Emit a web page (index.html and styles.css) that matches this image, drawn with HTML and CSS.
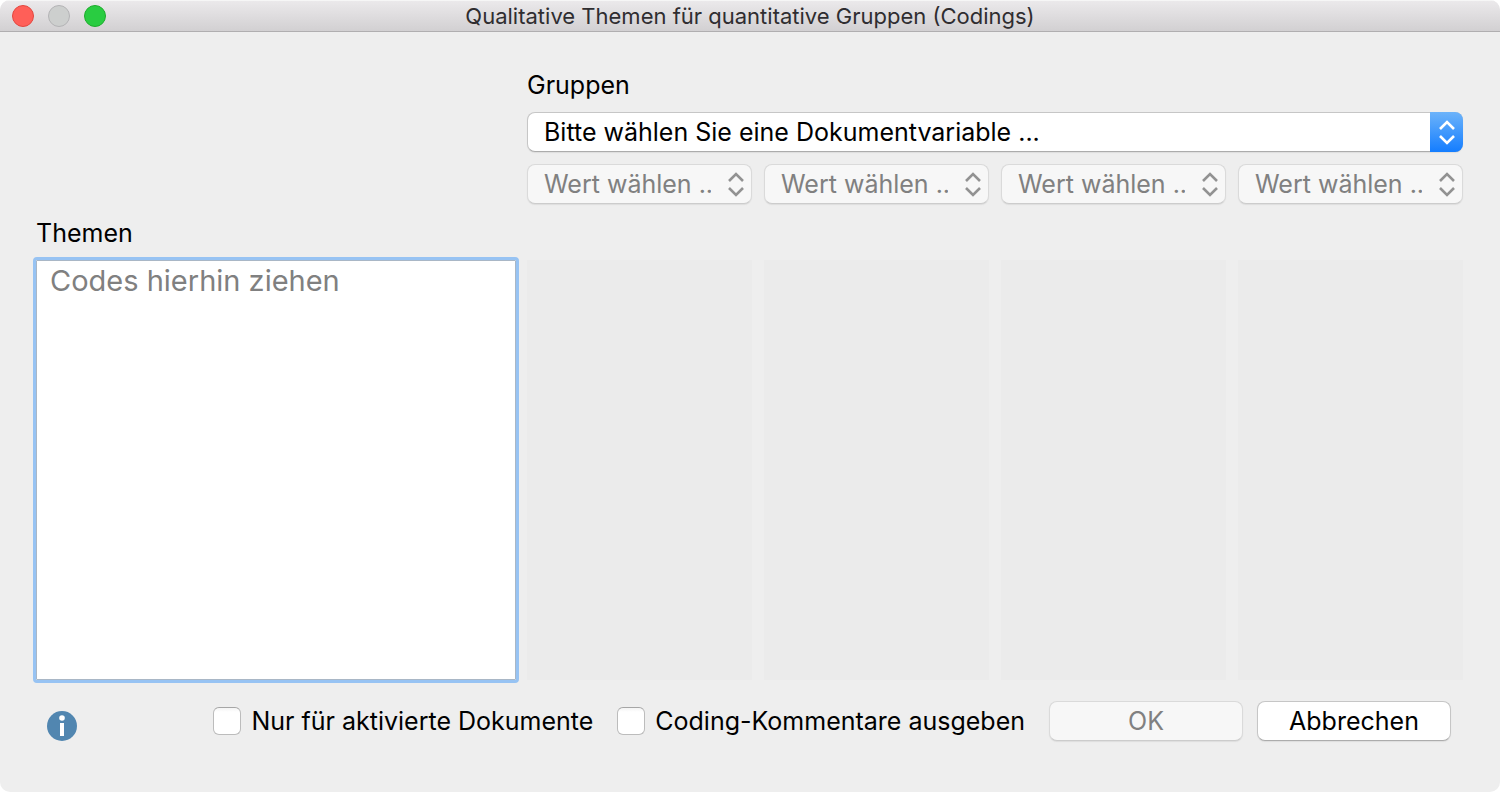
FILE: index.html
```html
<!DOCTYPE html>
<html lang="de">

<head>
    <meta charset="UTF-8">
    <meta name="viewport" content="width=device-width, initial-scale=1">
    <link rel="stylesheet" href="styles.css">
    <title>Qualitative Themen für quantitative Gruppen (Codings)</title>
</head>

<body>
    <div class="window">
        <header class="titlebar">
            <div class="lights">
                <button class="light close" type="button" aria-label="Schließen"></button>
                <button class="light minimize" type="button" aria-label="Minimieren" disabled></button>
                <button class="light maximize" type="button" aria-label="Maximieren"></button>
            </div>
            <h1 class="title">Qualitative Themen für quantitative Gruppen (Codings)</h1>
        </header>

        <form class="content">
            <label class="themes-label" for="themes">Themen</label>
            <textarea class="themes" id="themes" placeholder="Codes hierhin ziehen"></textarea>

            <div class="groups">
                <label class="groups-label" for="variable">Gruppen</label>
                <div class="dropdown">
                    <select id="variable">
                        <option>Bitte wählen Sie eine Dokumentvariable ...</option>
                    </select>
                    <span class="arrows">
                        <svg width="16" height="26" viewBox="0 0 16 26"><path d="M1 10 8 3l7 7M1 17l7 7 7-7"/></svg>
                    </span>
                </div>
                <div class="values">
                    <div class="dropdown">
                        <select aria-label="Wert Gruppe 1" disabled>
                            <option>Wert wählen ...</option>
                        </select>
                        <span class="arrows">
                            <svg width="16" height="26" viewBox="0 0 16 26"><path d="M1 10 8 3l7 7M1 17l7 7 7-7"/></svg>
                        </span>
                    </div>
                    <div class="dropdown">
                        <select aria-label="Wert Gruppe 2" disabled>
                            <option>Wert wählen ...</option>
                        </select>
                        <span class="arrows">
                            <svg width="16" height="26" viewBox="0 0 16 26"><path d="M1 10 8 3l7 7M1 17l7 7 7-7"/></svg>
                        </span>
                    </div>
                    <div class="dropdown">
                        <select aria-label="Wert Gruppe 3" disabled>
                            <option>Wert wählen ...</option>
                        </select>
                        <span class="arrows">
                            <svg width="16" height="26" viewBox="0 0 16 26"><path d="M1 10 8 3l7 7M1 17l7 7 7-7"/></svg>
                        </span>
                    </div>
                    <div class="dropdown">
                        <select aria-label="Wert Gruppe 4" disabled>
                            <option>Wert wählen ...</option>
                        </select>
                        <span class="arrows">
                            <svg width="16" height="26" viewBox="0 0 16 26"><path d="M1 10 8 3l7 7M1 17l7 7 7-7"/></svg>
                        </span>
                    </div>
                </div>
            </div>

            <!-- one drop area for each group -->
            <div class="columns">
                <div class="column"></div>
                <div class="column"></div>
                <div class="column"></div>
                <div class="column"></div>
            </div>

            <footer class="footer">
                <button class="info" type="button" aria-label="Info">
                    <svg width="30" height="30" viewBox="0 0 30 30">
                        <circle cx="15" cy="15" r="15" fill="#5186b0"/>
                        <circle cx="15" cy="7" r="2.800" fill="#fff"/>
                        <path d="M13 12h4v13h-4z" fill="#fff"/>
                    </svg>
                </button>
                <label class="check"><input type="checkbox">Nur für aktivierte Dokumente</label>
                <label class="check"><input type="checkbox">Coding-Kommentare ausgeben</label>
                <div class="buttons">
                    <button class="button" type="submit" disabled>OK</button>
                    <button class="button" type="button">Abbrechen</button>
                </div>
            </footer>
        </form>
    </div>
</body>

</html>
```
FILE: styles.css
```css
* {
    box-sizing: border-box;
    font-family: Inter, "Liberation Sans", sans-serif;
}

body {
    margin: 0;
    background-color: white;
    color: black;
    font-size: 25px;
    line-height: 32px;
}

.window {
    display: flex;
    flex-direction: column;
    min-height: 100vh;
    background-color: #eeeeee;
    border-radius: 10px;
    overflow: hidden;
}

.titlebar {
    display: grid;
    grid-template-columns: 1fr auto 1fr;
    align-items: center;
    height: 32px;
    padding: 0 12px;
    background: linear-gradient(#ebe9eb, #d2d0d2);
    border-top: 1px solid #f6f6f6;
    border-bottom: 1px solid #b0aeb0;
}

.lights {
    display: flex;
    gap: 14px;
}

.light {
    width: 22px;
    height: 22px;
    padding: 0;
    border: 1px solid;
    border-radius: 50%;
}

.close {
    background-color: #ff5f58;
    border-color: #e2473f;
}

.minimize {
    background-color: #cdcfce;
    border-color: #b3b3b5;
}

.maximize {
    background-color: #29cc41;
    border-color: #1dac2c;
}

.title {
    margin: 0;
    color: #2f2d30;
    font-size: 22px;
    font-weight: 400;
    line-height: 30px;
}

.content {
    flex: 1;
    display: grid;
    grid-template-columns: 480fr 936fr;
    grid-template-rows: auto 1fr auto;
    column-gap: 11px;
    padding: 37px 37px 51px 36px;
}

.themes-label {
    grid-area: 1 / 1;
    align-self: end;
    padding-bottom: 11px;
}

.groups {
    grid-area: 1 / 2;
    padding-bottom: 56px;
}

.groups-label {
    display: block;
    padding-bottom: 11px;
}

.dropdown {
    display: grid;
    min-width: 0;
}

.dropdown select, .dropdown .arrows {
    grid-area: 1 / 1;
}

.dropdown select {
    appearance: none;
    width: 100%;
    height: 40px;
    margin: 0;
    padding: 0 40px 0 16px;
    border: 1px solid #c6c6c6;
    border-bottom-color: #acacac;
    border-radius: 8px;
    background-color: white;
    box-shadow: 0 1px 1px #dddddd;
    color: black;
    font-size: 25px;
}

.dropdown select:disabled {
    background-color: #f7f7f7;
    border-color: #dadada;
    border-bottom-color: #cccccc;
    color: #808080;
    opacity: 1;
}

.arrows {
    display: flex;
    justify-content: center;
    align-items: center;
    justify-self: end;
    width: 33px;
    height: 40px;
    border-radius: 0 8px 8px 0;
    background: linear-gradient(#6cb3fa, #147dff);
    pointer-events: none;
}

.arrows path {
    fill: none;
    stroke: white;
    stroke-width: 2.6;
}

select:disabled + .arrows {
    background: none;
}

select:disabled + .arrows path {
    stroke: #929292;
}

.values, .columns {
    display: grid;
    grid-template-columns: repeat(4, 1fr);
    gap: 12px;
}

.values {
    padding-top: 12px;
}

.themes {
    grid-area: 2 / 1;
    width: 100%;
    height: 100%;
    margin: 0;
    padding: 0 13px;
    border: 1px solid #a9b7c6;
    border-radius: 1px;
    outline: 3px solid #97c3f3;
    background-color: white;
    font-size: 29px;
    line-height: 40px;
    resize: none;
}

.themes::placeholder {
    color: #808080;
    opacity: 1;
}

.columns {
    grid-area: 2 / 2;
}

.column {
    background-color: #ebebeb;
}

.footer {
    grid-area: 3 / 1 / auto / span 2;
    display: flex;
    align-items: center;
    gap: 24px;
    padding: 21px 12px 0 11px;
}

.info {
    display: flex;
    align-self: flex-end;
    margin-right: auto;
    padding: 0;
    border: 0;
    background: none;
}

.check {
    display: flex;
    align-items: center;
    gap: 10px;
}

.check input {
    appearance: none;
    width: 28px;
    height: 28px;
    margin: 0;
    border: 1px solid #bcbcbc;
    border-top-color: #a6a6a6;
    border-radius: 6px;
    background: linear-gradient(#f4f4f4, white 4px);
}

.check input:checked {
    background: #147dff;
}

.buttons {
    display: flex;
    gap: 14px;
}

.button {
    width: 194px;
    height: 40px;
    padding: 0;
    border: 1px solid #c6c6c6;
    border-bottom-color: #acacac;
    border-radius: 8px;
    background-color: white;
    box-shadow: 0 1px 1px #dddddd;
    color: black;
    font-size: 25px;
}

.button:disabled {
    background-color: #f7f7f7;
    border-color: #dadada;
    border-bottom-color: #cccccc;
    color: #808080;
}
```
